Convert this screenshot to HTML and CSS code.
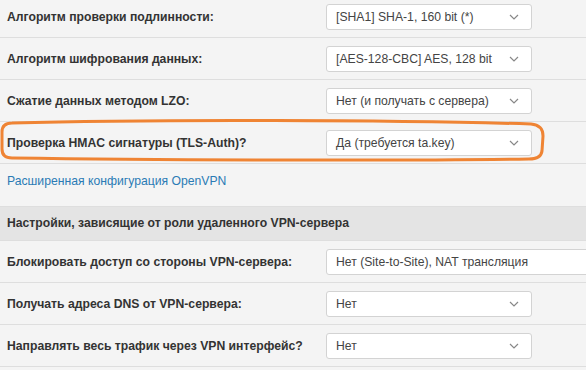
FILE: index.html
```html
<!DOCTYPE html>
<html>
<head>
    <title>OpenVPN</title>
    <meta charset="UTF-8">
    <link rel="stylesheet" href="styles.css">
</head>
<body>
    <div class="форма">
        <div class="строка первая">
            <div class="метка">Алгоритм проверки подлинности:</div>
            <div class="выбор"><span>[SHA1] SHA-1, 160 bit (*)</span><svg class="стрелка" viewBox="0 0 10 6"><path d="M1 1 L5 5 L9 1"/></svg></div>
        </div>
        <div class="строка">
            <div class="метка">Алгоритм шифрования данных:</div>
            <div class="выбор"><span>[AES-128-CBC] AES, 128 bit</span><svg class="стрелка" viewBox="0 0 10 6"><path d="M1 1 L5 5 L9 1"/></svg></div>
        </div>
        <div class="строка">
            <div class="метка">Сжатие данных методом LZO:</div>
            <div class="выбор"><span>Нет (и получать с сервера)</span><svg class="стрелка" viewBox="0 0 10 6"><path d="M1 1 L5 5 L9 1"/></svg></div>
        </div>
        <div class="строка отмечено">
            <div class="метка">Проверка HMAC сигнатуры (TLS-Auth)?</div>
            <div class="выбор"><span>Да (требуется ta.key)</span><svg class="стрелка" viewBox="0 0 10 6"><path d="M1 1 L5 5 L9 1"/></svg></div>
            <svg class="пометка" viewBox="0 0 548 46" width="548" height="46">
                <path d="M12 5 C 150 1, 400 2, 531 6 Q 543 7, 543 18 L 542 33 Q 541 41, 529 41 C 400 43, 150 42, 12 40 Q 2 40, 2 31 L 2 14 Q 2 5, 12 5 Z"/>
            </svg>
        </div>
        <div class="ссылка-строка">
            <a href="#" class="ссылка">Расширенная конфигурация OpenVPN</a>
        </div>
        <div class="раздел">Настройки, зависящие от роли удаленного VPN-сервера</div>
        <div class="строка">
            <div class="метка">Блокировать доступ со стороны VPN-сервера:</div>
            <div class="выбор широкий"><span>Нет (Site-to-Site), NAT трансляция</span></div>
        </div>
        <div class="строка">
            <div class="метка">Получать адреса DNS от VPN-сервера:</div>
            <div class="выбор"><span>Нет</span><svg class="стрелка" viewBox="0 0 10 6"><path d="M1 1 L5 5 L9 1"/></svg></div>
        </div>
        <div class="строка">
            <div class="метка">Направлять весь трафик через VPN интерфейс?</div>
            <div class="выбор"><span>Нет</span><svg class="стрелка" viewBox="0 0 10 6"><path d="M1 1 L5 5 L9 1"/></svg></div>
        </div>
    </div>
</body>
</html>
```

FILE: styles.css
```css
:root {
    --фон: #f4f4f4;
    --линия: #dedede;
    --текст: #333;
    --оранж: #ef8434;
}

body {
    margin: 0;
    background: var(--фон);
    color: var(--текст);
    font-family: 'Liberation Sans', Arial, sans-serif;
    font-size: 12.2px;
    overflow: hidden;
}

.форма {
    margin-top: -4px;
    width: 586px;
    overflow: hidden;
}

/* строки формы */
.строка {
    display: grid;
    grid-template-columns: 319px 206px;
    align-items: center;
    padding: 8px 0 7px 7px;
    border-bottom: 1px solid var(--линия);
    position: relative;
}

.метка {
    font-weight: bold;
    white-space: nowrap;
}

.выбор {
    box-sizing: border-box;
    height: 26px;
    background: #fff;
    border: 1px solid #d3d3d3;
    border-radius: 3px;
    display: flex;
    align-items: center;
    justify-content: space-between;
    padding: 0 12px 0 9px;
    white-space: nowrap;
    color: #444;
}

.выбор.широкий {
    width: 300px;
}

.стрелка {
    width: 10px;
    height: 6px;
    fill: none;
    stroke: #888;
    stroke-width: 1.2;
}

/* пометка вокруг строки */
.пометка {
    position: absolute;
    left: 0;
    top: -4px;
    fill: none;
    stroke: var(--оранж);
    stroke-width: 3;
    pointer-events: none;
}

.ссылка-строка {
    height: 32px;
    padding: 10px 0 0 7px;
}

.ссылка {
    color: #2b7bb5;
    text-decoration: none;
}

.раздел {
    background: #e4e4e4;
    font-weight: bold;
    padding: 0 7px;
    height: 33px;
    line-height: 33px;
    border-top: 1px solid var(--линия);
    border-bottom: 1px solid var(--линия);
}
```
